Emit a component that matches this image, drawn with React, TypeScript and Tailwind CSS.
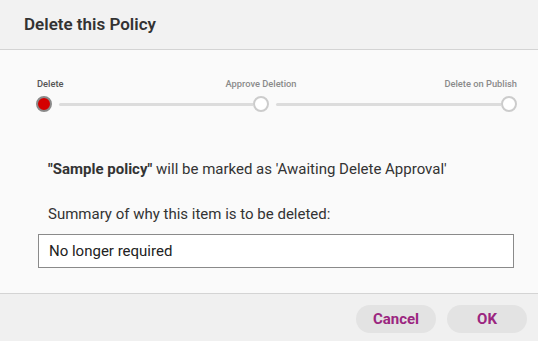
import React from "react";

function Dot({ active }: { active: boolean }) {
  return active ? (
    <span className="h-4 w-4 rounded-full border-[2.5px] border-[#8a8a8a] bg-[#d40000]" />
  ) : (
    <span className="h-4 w-4 rounded-full border-2 border-[#cccccc] bg-white" />
  );
}

export default function App() {
  return (
    <div
      className="flex h-[341px] w-[538px] flex-col bg-[#fafafa] text-[#333]"
      style={{ fontFamily: "Roboto, 'Liberation Sans', sans-serif" }}
    >
      <header className="flex h-[50px] shrink-0 items-center border-b border-[#d4d4d4] bg-[#f2f2f2] px-6">
        <h1 className="pt-[1px] text-[17px] font-semibold text-[#333]">Delete this Policy</h1>
      </header>

      <main className="flex flex-1 flex-col pl-[36px] pr-[21px] pt-[29px]">
        <div className="grid grid-cols-[16px_7px_194px_16px_7px_1fr_16px] gap-y-[7px] text-[9.3px] font-medium leading-[10px]">
          <div className="flex justify-start whitespace-nowrap pl-[1px] text-[#555]">Delete</div>
          <div className="col-span-3 col-start-4 flex w-4 justify-center whitespace-nowrap text-[#8a8a8a]">
            Approve Deletion
          </div>
          <div className="col-start-7 flex justify-end whitespace-nowrap text-[#8a8a8a]">Delete on Publish</div>

          <Dot active />
          <span />
          <span className="self-center h-[3px] rounded-l bg-[#dcdcdc]" />
          <Dot active={false} />
          <span />
          <span className="self-center h-[3px] rounded-l bg-[#dcdcdc]" />
          <Dot active={false} />
        </div>

        <p className="mt-[50px] pl-[12px] text-[15px] leading-none text-[#333]">
          <span className="font-bold">"Sample policy"</span> will be marked as 'Awaiting Delete Approval'
        </p>

        <label className="mt-[30px] block pl-[12px] text-[15px] leading-none text-[#333]">
          Summary of why this item is to be deleted:
        </label>
        <div className="ml-[2px] mt-[12px] flex h-[34px] w-[476px] items-center border border-[#8a8a8a] bg-white px-[10px] text-[15px] text-[#222]">
          No longer required
        </div>
      </main>

      <footer className="flex h-[48px] shrink-0 items-start justify-end gap-[11px] border-t border-[#d4d4d4] bg-[#f0f0f0] pr-[11px] pt-[11px]">
        <button className="h-[28px] w-[80px] rounded-full bg-[#e3e3e3] text-[15px] font-bold text-[#9b2680]">
          Cancel
        </button>
        <button className="h-[28px] w-[80px] rounded-full bg-[#e3e3e3] text-[15px] font-bold text-[#9b2680]">
          OK
        </button>
      </footer>
    </div>
  );
}
